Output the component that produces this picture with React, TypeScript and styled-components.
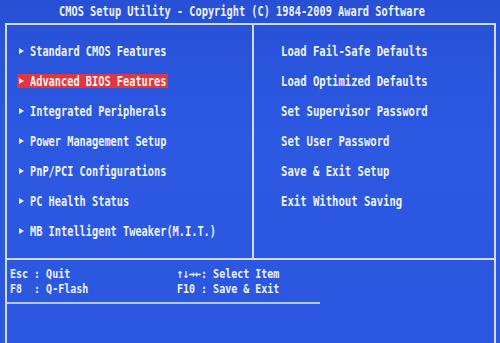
import React from "react";
import styled, { createGlobalStyle } from "styled-components";

const GlobalStyle = createGlobalStyle`
  html, body {
    margin: 0;
    padding: 0;
    background: #2a55de;
  }
`;

const Screen = styled.div`
  width: 500px;
  height: 343px;
  overflow: hidden;
  display: flex;
  flex-direction: column;
  background: linear-gradient(180deg, #2750d6 0%, #2c58e2 40%, #2b57e0 100%);
  font-family: "DejaVu Sans Mono", "Liberation Mono", monospace;
  font-weight: bold;
  color: #eef3ff;
`;

const Title = styled.div`
  height: 21px;
  display: flex;
  align-items: center;
  justify-content: center;
  padding: 0 16px 2px 0;
`;

const Frame = styled.div`
  flex: 1;
  margin: 0 4px 0 5px;
  border: 2px solid #cfdcff;
  border-bottom: none;
  display: flex;
  flex-direction: column;
`;

const Menus = styled.div`
  height: 233px;
  display: grid;
  grid-template-columns: 245px 1fr;
`;

const Column = styled.div<{ $right?: boolean }>`
  display: flex;
  flex-direction: column;
  padding: 11px 0 0 ${(p) => (p.$right ? "27px" : "10px")};
  border-left: ${(p) => (p.$right ? "2px solid #cfdcff" : "none")};
`;

const Row = styled.div`
  height: 30px;
  display: flex;
  align-items: center;
`;

const Item = styled.div<{ $active?: boolean }>`
  display: inline-flex;
  align-items: center;
  gap: 6px;
  padding: 0 2px;
  height: 14px;
  background: ${(p) => (p.$active ? "#e1353f" : "transparent")};
  color: ${(p) => (p.$active ? "#fff4f0" : "#eef3ff")};
`;

const Arrow = styled.span`
  width: 0;
  height: 0;
  border-top: 3px solid transparent;
  border-bottom: 3px solid transparent;
  border-left: 5px solid currentColor;
`;

const Text = styled.span<{ $size?: number }>`
  display: inline-block;
  font-size: ${(p) => p.$size ?? 10.3}px;
  white-space: pre;
  transform: scaleY(1.3);
  transform-origin: center;
`;

const Footer = styled.div`
  border-top: 2px solid #cfdcff;
  display: grid;
  grid-template-columns: 167px 1fr;
  padding: 6px 0 0 3px;
  height: 36px;
`;

const Keys = styled.div`
  display: flex;
  flex-direction: column;
`;

const KeyLine = styled.div`
  height: 15px;
  display: flex;
  align-items: center;
`;

const FooterRule = styled.div`
  width: 313px;
  height: 2px;
  background: #cfdcff;
  opacity: 0.85;
`;

const leftItems = [
  "Standard CMOS Features",
  "Advanced BIOS Features",
  "Integrated Peripherals",
  "Power Management Setup",
  "PnP/PCI Configurations",
  "PC Health Status",
  "MB Intelligent Tweaker(M.I.T.)",
];

const rightItems = [
  "Load Fail-Safe Defaults",
  "Load Optimized Defaults",
  "Set Supervisor Password",
  "Set User Password",
  "Save & Exit Setup",
  "Exit Without Saving",
];

export default function App() {
  return (
    <>
      <GlobalStyle />
      <Screen>
        <Title>
          <Text>CMOS Setup Utility - Copyright (C) 1984-2009 Award Software</Text>
        </Title>
        <Frame>
          <Menus>
            <Column>
              {leftItems.map((name, i) => (
                <Row key={name}>
                  <Item $active={i === 1}>
                    <Arrow />
                    <Text>{name}</Text>
                  </Item>
                </Row>
              ))}
            </Column>
            <Column $right>
              {rightItems.map((name) => (
                <Row key={name}>
                  <Text $size={10.6}>{name}</Text>
                </Row>
              ))}
            </Column>
          </Menus>
          <Footer>
            <Keys>
              <KeyLine>
                <Text $size={10}>Esc : Quit</Text>
              </KeyLine>
              <KeyLine>
                <Text $size={10}>F8  : Q-Flash</Text>
              </KeyLine>
            </Keys>
            <Keys>
              <KeyLine>
                <Text $size={10}>↑↓→←: Select Item</Text>
              </KeyLine>
              <KeyLine>
                <Text $size={10}>F10 : Save & Exit</Text>
              </KeyLine>
            </Keys>
          </Footer>
          <FooterRule />
        </Frame>
      </Screen>
    </>
  );
}
